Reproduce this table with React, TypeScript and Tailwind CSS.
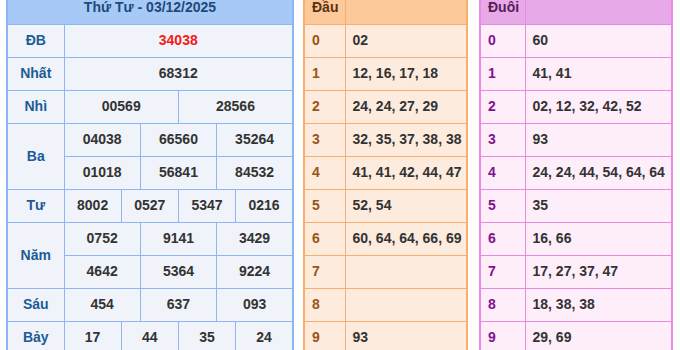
const prizes: { label: string; rows: string[][]; red?: boolean }[] = [
  { label: "ĐB", rows: [["34038"]], red: true },
  { label: "Nhất", rows: [["68312"]] },
  { label: "Nhì", rows: [["00569", "28566"]] },
  { label: "Ba", rows: [["04038", "66560", "35264"], ["01018", "56841", "84532"]] },
  { label: "Tư", rows: [["8002", "0527", "5347", "0216"]] },
  { label: "Năm", rows: [["0752", "9141", "3429"], ["4642", "5364", "9224"]] },
  { label: "Sáu", rows: [["454", "637", "093"]] },
  { label: "Bảy", rows: [["17", "44", "35", "24"]] },
];

const dau = ["02", "12, 16, 17, 18", "24, 24, 27, 29", "32, 35, 37, 38, 38", "41, 41, 42, 44, 47", "52, 54", "60, 64, 64, 66, 69", "", "", "93"];
const duoi = ["60", "41, 41", "02, 12, 32, 42, 52", "93", "24, 24, 44, 54, 64, 64", "35", "16, 66", "17, 27, 37, 47", "18, 38, 38", "29, 69"];

function ResultTable() {
  return (
    <table className="w-[288px] table-fixed border-collapse border-2 border-[#8db6f2] text-[14px] font-bold">
      <colgroup>
        <col className="w-[57px]" />
        {Array.from({ length: 12 }).map((_, i) => (
          <col key={i} />
        ))}
      </colgroup>
      <tbody>
        <tr className="h-[33px] bg-[#a7c9f7]">
          <td colSpan={13} className="border border-[#8db6f2] text-center text-[#1d4a78]">
            Thứ Tư - 03/12/2025
          </td>
        </tr>
        {prizes.map((p) =>
          p.rows.map((row, ri) => (
            <tr key={p.label + ri} className="h-[33px] bg-[#f0f3f9]">
              {ri === 0 && (
                <td rowSpan={p.rows.length} className="border border-[#8db6f2] text-center text-[#1b5c97]">
                  {p.label}
                </td>
              )}
              {row.map((n, i) => (
                <td
                  key={i}
                  colSpan={12 / row.length}
                  className={`border border-[#8db6f2] text-center ${p.red ? "text-[#f51b1b]" : "text-[#333333]"}`}
                >
                  {n}
                </td>
              ))}
            </tr>
          ))
        )}
      </tbody>
    </table>
  );
}

function LotoTable({ title, data, tone }: { title: string; data: string[]; tone: "dau" | "duoi" }) {
  const isDau = tone === "dau";
  const border = isDau ? "border-[#f9b06e]" : "border-[#e98ae3]";
  return (
    <table
      className={`table-fixed border-collapse border-2 text-[14px] font-bold ${border} ${isDau ? "w-[165px]" : "w-[194px]"}`}
    >
      <colgroup>
        <col className={isDau ? "w-[41px]" : "w-[45px]"} />
        <col />
      </colgroup>
      <tbody>
        <tr className={`h-[33px] ${isDau ? "bg-[#fbc99a]" : "bg-[#e7a9e7]"}`}>
          <td className={`border pl-[7px] ${border} ${isDau ? "text-[#5c3310]" : "text-[#5a1d56]"}`}>{title}</td>
          <td className={`border ${border}`}></td>
        </tr>
        {data.map((v, i) => (
          <tr key={i} className={`h-[33px] ${isDau ? "bg-[#fdebdd]" : "bg-[#fdeefa]"}`}>
            <td className={`border pl-[7px] ${border} ${isDau ? "text-[#9a5516]" : "text-[#83128c]"}`}>{i}</td>
            <td className={`border pl-[7px] text-[#333333] whitespace-nowrap ${border}`}>{v}</td>
          </tr>
        ))}
      </tbody>
    </table>
  );
}

export default function App() {
  return (
    <div className="h-[350px] w-[680px] overflow-hidden bg-white font-['Liberation_Sans',Arial,sans-serif]">
      <div className="mt-[-10px] flex items-start pl-[6px]">
        <ResultTable />
        <div className="ml-[9px]">
          <LotoTable title="Đầu" data={dau} tone="dau" />
        </div>
        <div className="ml-[11px]">
          <LotoTable title="Đuôi" data={duoi} tone="duoi" />
        </div>
      </div>
    </div>
  );
}
